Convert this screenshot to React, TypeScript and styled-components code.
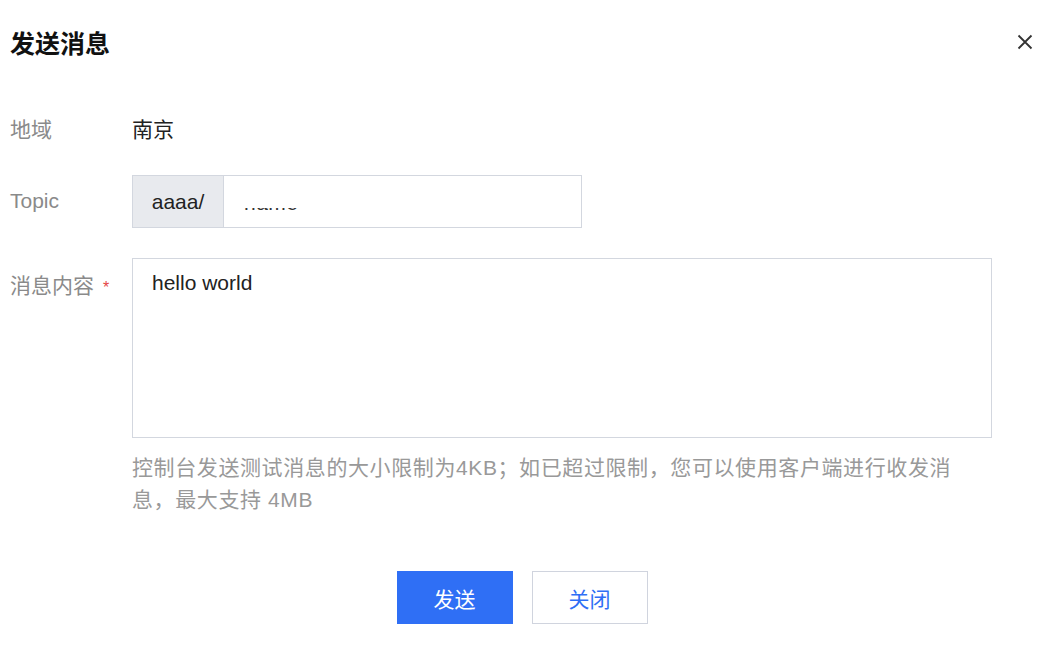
import React from 'react';
import styled, { createGlobalStyle } from 'styled-components';

const GlobalStyle = createGlobalStyle`
  body {
    margin: 0;
    background: #fff;
    font-family: "Liberation Sans", "Noto Sans CJK SC", sans-serif;
    color: #222;
  }
`;

const Dialog = styled.div`
  width: 1058px;
  height: 650px;
  padding: 0 10px;
  box-sizing: border-box;
  overflow: hidden;
`;

const Header = styled.div`
  display: flex;
  align-items: center;
  justify-content: space-between;
  height: 84px;
`;

const Title = styled.h2`
  margin: 0;
  font-size: 25px;
  font-weight: 700;
  color: #111;
`;

const CloseButton = styled.button`
  display: flex;
  align-items: center;
  justify-content: center;
  width: 24px;
  height: 24px;
  margin-right: 11px;
  padding: 0;
  border: none;
  background: none;
  cursor: pointer;
`;

const Form = styled.div`
  display: flex;
  flex-direction: column;
  padding-top: 28px;
`;

const Row = styled.div<{ $gap?: number }>`
  display: grid;
  grid-template-columns: 122px 1fr;
  align-items: start;
  margin-top: ${p => p.$gap ?? 0}px;
`;

const Label = styled.div<{ $offset?: number }>`
  font-size: 21px;
  line-height: 36px;
  color: #8a8a8a;
  margin-top: ${p => p.$offset ?? 0}px;
`;

const Star = styled.span`
  color: #e54545;
  font-size: 16px;
  margin-left: 9px;
`;

const Value = styled.div`
  font-size: 21px;
  line-height: 36px;
  color: #222;
`;

const InputGroup = styled.div`
  display: flex;
  width: 450px;
  height: 53px;
  border: 1px solid #d3d7df;
  box-sizing: border-box;
`;

const Addon = styled.div`
  display: flex;
  align-items: center;
  justify-content: center;
  width: 90px;
  background: #e8eaee;
  border-right: 1px solid #d3d7df;
  font-size: 21px;
  color: #222;
`;

const Field = styled.div`
  flex: 1;
  display: flex;
  align-items: center;
  padding-left: 20px;
  padding-top: 2px;
`;

const Masked = styled.span`
  display: inline-block;
  font-size: 21px;
  line-height: 21px;
  color: #333;
  letter-spacing: 0.5px;
  clip-path: inset(16px 0 3px 0);
`;

const TextArea = styled.div`
  width: 860px;
  height: 180px;
  border: 1px solid #d3d7df;
  box-sizing: border-box;
  padding: 8px 19px;
  font-size: 21px;
  line-height: 32px;
  color: #222;
`;

const Hint = styled.div`
  width: 830px;
  margin-top: 14px;
  font-size: 21px;
  line-height: 32px;
  letter-spacing: 0.6px;
  color: #999;
`;

const Footer = styled.div`
  display: flex;
  justify-content: center;
  gap: 19px;
  margin-top: 55px;
  padding-right: 14px;
`;

const Button = styled.button<{ $primary?: boolean }>`
  width: 116px;
  height: 53px;
  font-family: inherit;
  font-size: 21px;
  border: 1px solid ${p => (p.$primary ? '#2f6ff5' : '#d0d4de')};
  background: ${p => (p.$primary ? '#2f6ff5' : '#fff')};
  color: ${p => (p.$primary ? '#fff' : '#2f6ff5')};
  cursor: pointer;
`;

const CloseIcon = () => (
  <svg width="16" height="16" viewBox="0 0 16 16">
    <path d="M1.5 1.5 L14.5 14.5 M14.5 1.5 L1.5 14.5" stroke="#333" strokeWidth="1.8" />
  </svg>
);

const App: React.FC = () => (
  <>
    <GlobalStyle />
    <Dialog>
      <Header>
        <Title>发送消息</Title>
        <CloseButton aria-label="关闭">
          <CloseIcon />
        </CloseButton>
      </Header>
      <Form>
        <Row>
          <Label>地域</Label>
          <Value>南京</Value>
        </Row>
        <Row $gap={27}>
          <Label $offset={8}>Topic</Label>
          <InputGroup>
            <Addon>aaaa/</Addon>
            <Field>
              <Masked>name</Masked>
            </Field>
          </InputGroup>
        </Row>
        <Row $gap={30}>
          <Label $offset={10}>
            消息内容<Star>*</Star>
          </Label>
          <div>
            <TextArea>hello world</TextArea>
            <Hint>
              控制台发送测试消息的大小限制为4KB；如已超过限制，您可以使用客户端进行收发消息，最大支持 4MB
            </Hint>
          </div>
        </Row>
        <Footer>
          <Button $primary>发送</Button>
          <Button>关闭</Button>
        </Footer>
      </Form>
    </Dialog>
  </>
);

export default App;
